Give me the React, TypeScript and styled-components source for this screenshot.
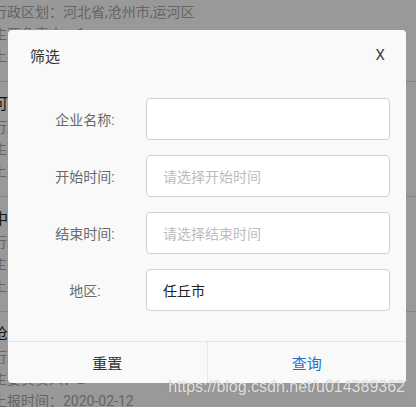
import React from "react";
import styled, { createGlobalStyle } from "styled-components";

const Global = createGlobalStyle`
  html, body { margin: 0; padding: 0; }
  body {
    width: 416px; height: 407px; overflow: hidden; background: #fff;
    font-family: Roboto, "Noto Sans CJK SC", sans-serif;
  }
`;

const Page = styled.div`
  position: relative;
  width: 416px;
  height: 407px;
  overflow: hidden;
`;

const List = styled.div`
  margin-top: -33px;
  margin-left: -7px;
  width: 430px;
`;

const Item = styled.div`
  padding: 10px 12px 14px 0;
  border-bottom: 1px solid #dcdcdc;
`;

const ItemTitle = styled.div`
  font-size: 15px;
  line-height: 24px;
  color: #1e1e1e;
  white-space: nowrap;
`;

const ItemLine = styled.div`
  font-size: 14px;
  line-height: 22px;
  color: #a8a8a8;
  white-space: nowrap;
`;

const Mask = styled.div`
  position: absolute;
  inset: 0;
  background: rgba(0, 0, 0, 0.4);
`;

const Modal = styled.div`
  position: absolute;
  left: 8px;
  top: 30px;
  width: 398px;
  height: 353px;
  background: #f9f9f9;
  border-radius: 4px;
  display: flex;
  flex-direction: column;
  overflow: hidden;
`;

const Header = styled.div`
  height: 50px;
  padding: 0 21px 0 22px;
  display: flex;
  align-items: center;
  justify-content: space-between;
  flex-shrink: 0;
`;

const Title = styled.div`
  font-size: 15px;
  color: #333;
`;

const Close = styled.div`
  font-size: 15px;
  color: #444;
`;

const Body = styled.div`
  flex: 1;
  padding: 18px 16px 0 16px;
  display: flex;
  flex-direction: column;
  gap: 15px;
`;

const Row = styled.div`
  display: flex;
  align-items: center;
  height: 42px;
`;

const Label = styled.div`
  flex: 0 0 122px;
  text-align: center;
  font-size: 14px;
  color: #6a6a6a;
`;

const Field = styled.div<{ $placeholder?: boolean }>`
  flex: 1;
  height: 42px;
  box-sizing: border-box;
  border: 1px solid #d2d2d2;
  border-radius: 4px;
  background: #fff;
  padding: 0 16px;
  display: flex;
  align-items: center;
  font-size: 14px;
  color: ${(p) => (p.$placeholder ? "#bdbdbd" : "#222")};
`;

const Footer = styled.div`
  height: 41px;
  flex-shrink: 0;
  display: flex;
  border-top: 1px solid #e6e6e6;
`;

const FooterButton = styled.div<{ $primary?: boolean }>`
  flex: 1;
  display: flex;
  align-items: center;
  justify-content: center;
  font-size: 15px;
  color: ${(p) => (p.$primary ? "#1a73d4" : "#333")};
  & + & { border-left: 1px solid #e6e6e6; }
`;

const Watermark = styled.div`
  position: absolute;
  right: 11px;
  top: 378px;
  font-family: "Liberation Sans", Arial, sans-serif;
  font-size: 16px;
  color: rgba(255, 255, 255, 0.8);
  text-shadow: 0 0 1px rgba(90, 90, 90, 0.6);
  white-space: nowrap;
`;

const items = [
  { title: "", lines: ["行政区划：河北省,沧州市,运河区", "主要负责人：1", "上报时间：2020-02-12"] },
  { title: "可利达建材有限公司", lines: ["行政区划：河北省,沧州市,运河区", "主要负责人：1", "上报时间：2020-02-12"] },
  { title: "中兴化工有限公司", lines: ["行政区划：河北省,沧州市,运河区", "主要负责人：1", "上报时间：2020-02-12"] },
  { title: "沧州市恒达有限公司", lines: ["行政区划：河北省,沧州市,运河区", "主要负责人：2", "上报时间：2020-02-12"] },
];

const fields = [
  { label: "企业名称:", value: "", placeholder: false },
  { label: "开始时间:", value: "请选择开始时间", placeholder: true },
  { label: "结束时间:", value: "请选择结束时间", placeholder: true },
  { label: "地区:", value: "任丘市", placeholder: false },
];

export default function App() {
  return (
    <Page>
      <Global />
      <List>
        {items.map((it, i) => (
          <Item key={i}>
            <ItemTitle>{it.title || "\u00a0"}</ItemTitle>
            {it.lines.map((l, j) => (
              <ItemLine key={j}>{l}</ItemLine>
            ))}
          </Item>
        ))}
      </List>
      <Mask />
      <Modal>
        <Header>
          <Title>筛选</Title>
          <Close>X</Close>
        </Header>
        <Body>
          {fields.map((f) => (
            <Row key={f.label}>
              <Label>{f.label}</Label>
              <Field $placeholder={f.placeholder}>{f.value}</Field>
            </Row>
          ))}
        </Body>
        <Footer>
          <FooterButton>重置</FooterButton>
          <FooterButton $primary>查询</FooterButton>
        </Footer>
      </Modal>
      <Watermark>https://blog.csdn.net/u014389362</Watermark>
    </Page>
  );
}
